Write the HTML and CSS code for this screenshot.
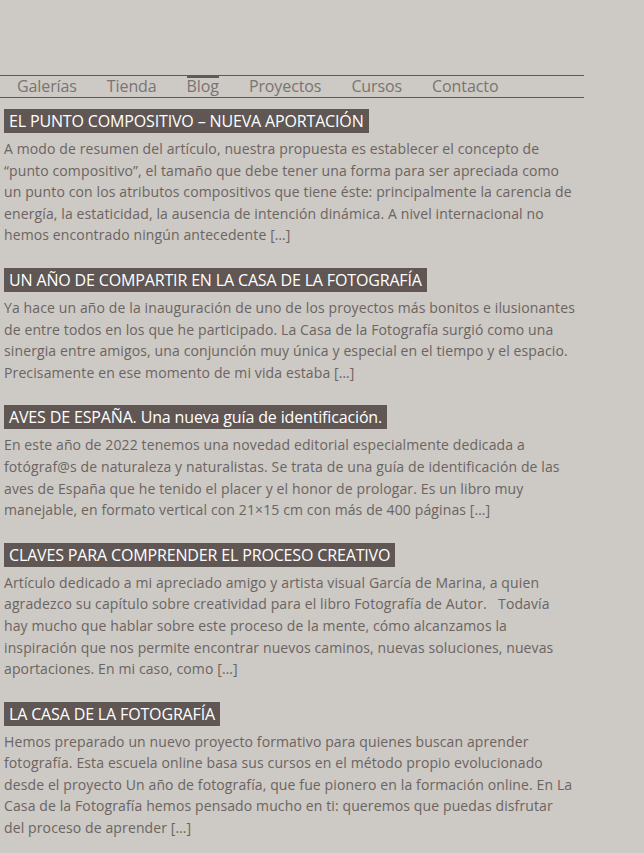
FILE: index.html
```html
<!DOCTYPE html>
<html lang="es">
<head>
<meta charset="utf-8">
<title>Blog</title>
<link rel="stylesheet" href="styles.css">
</head>
<body>
<div class="page">
  <nav class="menu">
    <a class="item" href="#">Galerías</a>
    <a class="item" href="#">Tienda</a>
    <a class="item active" href="#">Blog</a>
    <a class="item" href="#">Proyectos</a>
    <a class="item" href="#">Cursos</a>
    <a class="item" href="#">Contacto</a>
  </nav>
  <main class="posts">
    <article class="post">
      <h2 class="title">EL PUNTO COMPOSITIVO – NUEVA APORTACIÓN</h2>
      <p class="excerpt">A modo de resumen del artículo, nuestra propuesta es establecer el concepto de<br>“punto compositivo”, el tamaño que debe tener una forma para ser apreciada como<br>un punto con los atributos compositivos que tiene éste: principalmente la carencia de<br>energía, la estaticidad, la ausencia de intención dinámica. A nivel internacional no<br>hemos encontrado ningún antecedente […]</p>
    </article>
    <article class="post">
      <h2 class="title">UN AÑO DE COMPARTIR EN LA CASA DE LA FOTOGRAFÍA</h2>
      <p class="excerpt">Ya hace un año de la inauguración de uno de los proyectos más bonitos e ilusionantes<br>de entre todos en los que he participado. La Casa de la Fotografía surgió como una<br>sinergia entre amigos, una conjunción muy única y especial en el tiempo y el espacio.<br>Precisamente en ese momento de mi vida estaba […]</p>
    </article>
    <article class="post">
      <h2 class="title">AVES DE ESPAÑA. Una nueva guía de identificación.</h2>
      <p class="excerpt">En este año de 2022 tenemos una novedad editorial especialmente dedicada a<br>fotógraf@s de naturaleza y naturalistas. Se trata de una guía de identificación de las<br>aves de España que he tenido el placer y el honor de prologar. Es un libro muy<br>manejable, en formato vertical con 21×15 cm con más de 400 páginas […]</p>
    </article>
    <article class="post">
      <h2 class="title">CLAVES PARA COMPRENDER EL PROCESO CREATIVO</h2>
      <p class="excerpt">Artículo dedicado a mi apreciado amigo y artista visual García de Marina, a quien<br>agradezco su capítulo sobre creatividad para el libro Fotografía de Autor. &nbsp; Todavía<br>hay mucho que hablar sobre este proceso de la mente, cómo alcanzamos la<br>inspiración que nos permite encontrar nuevos caminos, nuevas soluciones, nuevas<br>aportaciones. En mi caso, como […]</p>
    </article>
    <article class="post">
      <h2 class="title">LA CASA DE LA FOTOGRAFÍA</h2>
      <p class="excerpt">Hemos preparado un nuevo proyecto formativo para quienes buscan aprender<br>fotografía. Esta escuela online basa sus cursos en el método propio evolucionado<br>desde el proyecto Un año de fotografía, que fue pionero en la formación online. En La<br>Casa de la Fotografía hemos pensado mucho en ti: queremos que puedas disfrutar<br>del proceso de aprender […]</p>
    </article>
  </main>
</div>
</body>
</html>
```
FILE: styles.css
```css
html, body {
  margin: 0;
  padding: 0;
  background: #cdc9c4;
}
body {
  font-family: "Open Sans", "DejaVu Sans", sans-serif;
  color: #6b6462;
}
.page {
  width: 584px;
  padding-top: 75px;
}
.menu {
  display: flex;
  gap: 30px;
  padding-left: 17px;
  height: 21px;
  border-top: 1px solid #5f5856;
  border-bottom: 1px solid #5f5856;
}
.item {
  position: relative;
  font-size: 16px;
  line-height: 21px;
  color: #7a7472;
  text-decoration: none;
  letter-spacing: -0.1px;
}
.item.active::before {
  content: "";
  position: absolute;
  left: 0;
  right: 0;
  top: -1px;
  height: 3px;
  background: #5f5856;
}
.posts {
  display: flex;
  flex-direction: column;
  gap: 22px;
  padding: 11px 0 0 4px;
}
.post {
  display: flex;
  flex-direction: column;
  align-items: flex-start;
  gap: 5px;
}
.title {
  margin: 0;
  background: #605755;
  color: #ffffff;
  font-weight: 400;
  font-size: 16px;
  line-height: 24px;
  padding: 0 5px;
  letter-spacing: -0.15px;
}
.excerpt {
  margin: 0;
  font-size: 14px;
  line-height: 21.6px;
  white-space: nowrap;
  letter-spacing: 0.12px;
}
```
